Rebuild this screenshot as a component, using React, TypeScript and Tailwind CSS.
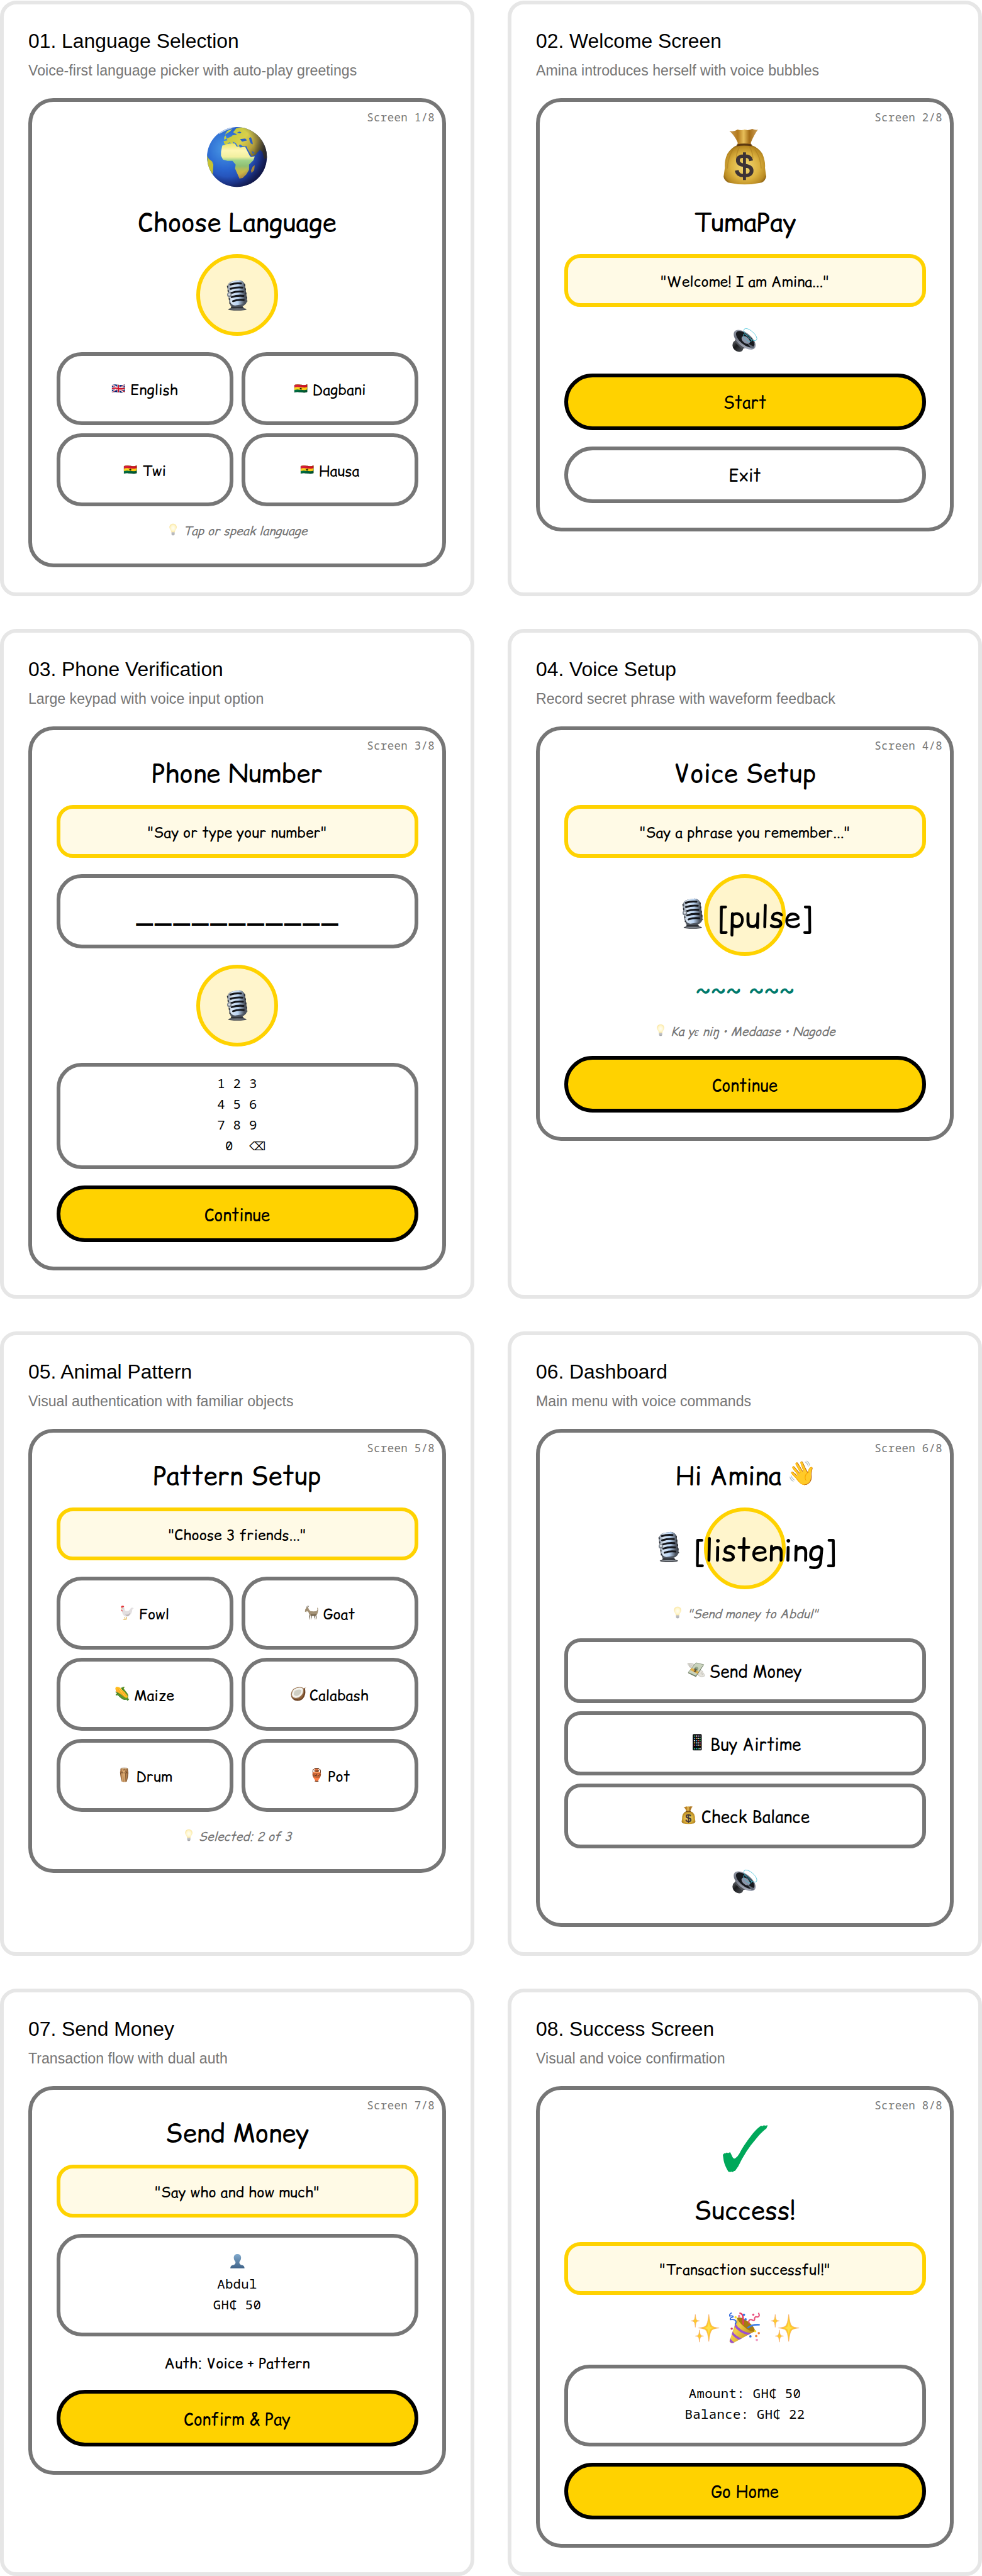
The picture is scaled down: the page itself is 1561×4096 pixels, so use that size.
import React from "react";

type Kids = { children: React.ReactNode };

/* ---------- pictograms: each is drawn on a 100 x 100 grid that is 1.25em wide ---------- */

function Pic({ children }: Kids) {
  return (
    <svg viewBox="0 0 100 100" className="inline-block h-[1.25em] w-[1.25em] -mx-[0.125em] -my-[0.3em] shrink-0 overflow-visible align-[0.125em]">
      {children}
    </svg>
  );
}

function Glyph({ char, size, flip, squash = 1 }: { char: string; size: number; flip?: boolean; squash?: number }) {
  return (
    <Pic>
      <text
        x="50"
        y={50 + size * 0.34}
        fontSize={size}
        textAnchor="middle"
        transform={flip ? "matrix(-1 0 0 1 100 0)" : `matrix(1 0 0 ${squash} 0 ${50 * (1 - squash)})`}
        className="font-['Noto_Color_Emoji'] not-italic"
      >
        {char}
      </text>
    </Pic>
  );
}

function Globe() {
  return (
    <Pic>
      <defs>
        <radialGradient id="sea" cx="0.3" cy="0.36" r="0.75">
          <stop offset="0" stopColor="#4a9be6" />
          <stop offset="0.45" stopColor="#2a66d0" />
          <stop offset="0.8" stopColor="#2243a8" />
          <stop offset="1" stopColor="#1c2459" />
        </radialGradient>
        <linearGradient id="africa" x1="0" y1="0" x2="0" y2="1">
          <stop offset="0" stopColor="#ece56a" />
          <stop offset="0.2" stopColor="#fdf6b4" />
          <stop offset="0.38" stopColor="#f2f0a0" />
          <stop offset="0.48" stopColor="#9fd38a" />
          <stop offset="0.64" stopColor="#8fbf72" />
          <stop offset="0.78" stopColor="#c9bb4a" />
          <stop offset="1" stopColor="#d3a541" />
        </linearGradient>
        <linearGradient id="asia" x1="0" y1="0" x2="1" y2="0.6">
          <stop offset="0" stopColor="#b5c832" />
          <stop offset="0.5" stopColor="#d9cf4c" />
          <stop offset="0.75" stopColor="#b6a13c" />
          <stop offset="1" stopColor="#4b4420" />
        </linearGradient>
        <radialGradient id="shade" cx="0.36" cy="0.4" r="0.66">
          <stop offset="0.65" stopColor="#0b0f3a" stopOpacity="0" />
          <stop offset="1" stopColor="#0b0f3a" stopOpacity="0.65" />
        </radialGradient>
        <clipPath id="disc"><circle cx="50" cy="50" r="47" /></clipPath>
      </defs>
      <circle cx="50" cy="50" r="47" fill="url(#sea)" />
      <g clipPath="url(#disc)">
        <path d="M30 29l-1-4 6-1-1-3 7-3 2-2 6-1 2-3 4 1 2-2-3-1-3 1-1 3-3-1-3-2 5-6 9-2 8 1 12 6 9 9 9 18 2 14-5 2-3-11-4-3-3 3-4 5-6 2-6-11-2-5-6 0-4-3-2 2 2 3-3-1-4-6-5-2 3 5-2 1-5-5-3 1-2 4z" fill="url(#asia)" />
        <path d="M55 22l8-1 3 3-8 2zM69 20l3-1 2 5 1 6-3-1-2-4zM73 40l5 4-3 1z" fill="#2a5fc6" />
        <path d="M27 32l11-3 9 0 2 4 6 2 8-1 3 6 4 8 2 2 6-1-2 6-7 7 0 8-4 7-6 6-5 1-3-7-4-9 1-6-5-6-8 0-7-2-3-6 0-6z" fill="url(#africa)" />
        <path d="M78 63l-1 8-4 4-1-4 3-6z" fill="#c9a53f" />
        <path d="M3 48l3 5 5 4 2 5-1 16-3 0-4-9z" fill="#c6c233" />
        <path d="M30 19l2-3 2 5-4 2zM35 9l8-3-4 4-8 5z" fill="#c3cf4a" />
        <path d="M22 12q14-9 26-9l-6 2q-10 3-20 9z" fill="#dfe9ef" opacity="0.8" />
      </g>
      <circle cx="50" cy="50" r="47" fill="url(#shade)" />
    </Pic>
  );
}

function MoneyBag() {
  return (
    <Pic>
      <defs>
        <radialGradient id="bag" cx="0.5" cy="0.55" r="0.6">
          <stop offset="0" stopColor="#f3d873" />
          <stop offset="0.55" stopColor="#dcb240" />
          <stop offset="0.85" stopColor="#b98a22" />
          <stop offset="1" stopColor="#7d5410" />
        </radialGradient>
        <linearGradient id="neck" x1="0" x2="1" y1="0" y2="0">
          <stop offset="0" stopColor="#c99a52" />
          <stop offset="0.3" stopColor="#b37a1c" />
          <stop offset="0.5" stopColor="#e8bf5a" />
          <stop offset="0.7" stopColor="#a56d17" />
          <stop offset="1" stopColor="#d0a35c" />
        </linearGradient>
      </defs>
      <path d="M26 9q7 2 13-2 6 2 11 0 6 2 12-1 5 2 9 1-6 8-11 20v5H39v-5Q34 16 26 9z" fill="url(#neck)" />
      <path d="M39 31h21q12 4 18 14 5 12 4 22l2 14q-2 7-7 9-27 6-53 0-6-3-7-9l2-14q-1-12 4-22 6-10 16-14z" fill="url(#bag)" />
      <path d="M32 38q-8 12-9 30M66 38q9 12 10 30M42 34q-5 10-5 18M58 34q5 10 5 18" fill="none" stroke="#a87a1e" strokeWidth="1.6" opacity="0.5" />
      <path d="M38 30q11-2 23 0v3q-12-2-23 0z" fill="#5d3910" />
      <text x="49.5" y="82" fontSize="52" textAnchor="middle" fill="#3d3336" stroke="#3d3336" strokeWidth="1.6" className="font-['Liberation_Sans']">$</text>
    </Pic>
  );
}

function Mic() {
  return (
    <Pic>
      <defs>
        <linearGradient id="steel" x1="0" y1="0" x2="1" y2="0.25">
          <stop offset="0" stopColor="#7f8894" />
          <stop offset="0.3" stopColor="#d9e6f4" />
          <stop offset="0.65" stopColor="#b9d3f2" />
          <stop offset="1" stopColor="#4c535e" />
        </linearGradient>
      </defs>
      <ellipse cx="50" cy="87" rx="24" ry="3.4" fill="#40444b" />
      <ellipse cx="50" cy="86" rx="19" ry="1.4" fill="#9aa0a8" />
      <path d="M31 50q-1 22 7 31h26" fill="none" stroke="#565c66" strokeWidth="6" />
      <path d="M34 80h30l4 5H32z" fill="#2f3238" />
      <g transform="rotate(-8 50 45)">
        <rect x="26" y="12" width="47" height="68" rx="16" fill="#4f5660" />
        <rect x="27" y="12" width="45" height="64" rx="15" fill="url(#steel)" />
        <path d="M35 20q14-3 28 1M34 31q16-3 31 1M34 42q16-3 31 1M34 53q16-3 31 1M36 64q14-3 28 1" fill="none" stroke="#14161b" strokeWidth="5" strokeLinecap="round" />
        <path d="M27 22v48M72 24v46" stroke="#2a2d33" strokeWidth="3" strokeDasharray="5 6" />
      </g>
      <circle cx="29" cy="49" r="6" fill="#7c848e" />
      <circle cx="29" cy="48" r="3.2" fill="#d8dde3" />
    </Pic>
  );
}

function Speaker() {
  return (
    <Pic>
      <defs>
        <linearGradient id="magnet" x1="0" y1="0" x2="1" y2="1">
          <stop offset="0" stopColor="#6a6d72" />
          <stop offset="0.4" stopColor="#17181a" />
          <stop offset="1" stopColor="#55585d" />
        </linearGradient>
        <linearGradient id="rim" x1="0" y1="0" x2="1" y2="1">
          <stop offset="0" stopColor="#aab0bf" />
          <stop offset="0.5" stopColor="#6a6f7c" />
          <stop offset="1" stopColor="#c2c8d6" />
        </linearGradient>
      </defs>
      <path d="M7 60q-3 8 0 17 6 13 20 16 9 2 15-4l6-14-24-24q-12 0-17 9z" fill="url(#magnet)" />
      <path d="M22 36l-9 20 26 26 26-4z" fill="#4e5157" />
      <ellipse cx="50" cy="49" rx="48" ry="25" transform="rotate(40 50 49)" fill="url(#rim)" />
      <ellipse cx="52" cy="47" rx="41" ry="19" transform="rotate(40 52 47)" fill="#17191e" />
      <ellipse cx="54" cy="50" rx="18" ry="11" transform="rotate(40 54 50)" fill="#8b95a8" />
      <path d="M58 60l24 14 3 6-9 1z" fill="#5d6572" />
      <g fill="none" stroke="#3fc0d6" strokeWidth="1.7">
        <ellipse cx="71" cy="30" rx="30" ry="13" transform="rotate(42 71 30)" />
        <ellipse cx="60" cy="42" rx="19" ry="8" transform="rotate(42 60 42)" />
      </g>
    </Pic>
  );
}

function Bulb() {
  return (
    <Pic>
      <g opacity="0.62">
        <defs>
          <radialGradient id="glow" cx="0.5" cy="0.5" r="0.55">
            <stop offset="0" stopColor="#fffef0" />
            <stop offset="0.6" stopColor="#fff2b0" />
            <stop offset="1" stopColor="#f5cf55" />
          </radialGradient>
        </defs>
        <path d="M50 11c14 0 24 10 24 23 0 13-11 19-13 34H39C37 53 26 47 26 34c0-13 10-23 24-23z" fill="url(#glow)" />
        <path d="M40 68h20v14l-5 6H45l-5-6z" fill="#70727a" />
        <path d="M40 73h20M40 79h20" stroke="#c9ccd1" strokeWidth="2.5" />
      </g>
    </Pic>
  );
}

function Rooster() {
  return (
    <Pic>
      <path d="M36 74l2 10-10 2M46 74l0 11-10 3" fill="none" stroke="#dba52f" strokeWidth="3.2" strokeLinecap="round" />
      <path d="M21 24q3-7 9-5 4 2 5 12 2 9 12 9 13 0 18-10 7-13 21-5-8 1-9 9-2 22-17 32-12 8-23 3Q20 60 21 40z" fill="#e3dfe0" />
      <path d="M38 58q14 8 27-9-1 16-13 20-9 1-14-11z" fill="#bdb7b9" />
      <path d="M16 19q-2-7 3-7 5-3 9-1 5 1 4 7l-7 1-6 5zM18 31q6 2 5 12-5 0-6-6z" fill="#e2383b" />
      <path d="M20 25l-6 3 6 2z" fill="#e4b13d" />
      <circle cx="25" cy="24" r="1.6" fill="#222" />
    </Pic>
  );
}

function Goat() {
  return (
    <Pic>
      <path d="M40 62l-2 24M48 64l-1 22M72 60l5 24M66 60l2 26" stroke="#5f5341" strokeWidth="4.5" />
      <path d="M38 76l-1 11M47 78l-1 9M68 78l1 9M76 76l1 10" stroke="#e9e4da" strokeWidth="4.5" />
      <path d="M14 32l8-10 8-2 5 12 8 9q18 3 34 0l5-10q-3-5-1-10 6 4 5 14-3 22-9 29-14 4-32 2-9-1-12-18l-8-7-5 5-7-2z" fill="#a39175" />
      <path d="M45 56q14 6 30 0l-3 9q-14 3-26 1z" fill="#74654e" />
      <path d="M23 23q0-9 6-12M28 22q1-7 7-9" fill="none" stroke="#5b4f3d" strokeWidth="3" />
      <path d="M19 42l2 9 4-10z" fill="#ece6da" />
      <circle cx="23" cy="29" r="1.5" fill="#222" />
    </Pic>
  );
}

function Coconut() {
  return (
    <Pic>
      <path d="M88 16q8 28-2 48Q74 88 49 88 22 87 13 64l50-30z" fill="#6d4324" />
      <path d="M80 34q6 20-4 34-10 13-26 15 22-14 30-49z" fill="#8d5f38" />
      <path d="M24 24Q42 10 64 12q16 2 20 10 3 24-14 42Q52 82 31 76 13 72 12 52q2-17 12-28z" fill="#9a7654" />
      <path d="M27 27Q43 15 62 16q14 2 17 8 2 22-13 37Q50 76 33 71 18 67 17 52q2-15 10-25z" fill="#f4f3ee" />
      <path d="M33 34q14-10 28-8 9 2 9 8-2 14-12 21-12 9-23 5-9-4-8-11 1-9 6-15z" fill="#cfcfc4" />
      <path d="M86 22l9-8" stroke="#9a7654" strokeWidth="2" />
    </Pic>
  );
}

function Drum() {
  return (
    <Pic>
      <defs>
        <linearGradient id="barrel" x1="0" x2="1" y1="0" y2="0">
          <stop offset="0" stopColor="#a87040" />
          <stop offset="0.4" stopColor="#f0bd80" />
          <stop offset="1" stopColor="#8f5c30" />
        </linearGradient>
      </defs>
      <path d="M31 14q19-5 38 0l4 20q-1 30-9 52-14 5-27 0-9-22-10-52z" fill="url(#barrel)" />
      <ellipse cx="50" cy="14" rx="19" ry="3.5" fill="#f2d8b0" stroke="#6b4423" strokeWidth="1.6" />
      <path d="M28 38h45M30 16l8 22 12-22 12 22 8-22M29 38l9 48M43 38l3 50M58 38l-3 50M72 38l-9 48" fill="none" stroke="#5d3a1d" strokeWidth="2" />
    </Pic>
  );
}

function CashWings() {
  return (
    <Pic>
      <path d="M10 17q20-3 34 7l-4 24Q26 46 24 38q-8-1-8-8-6-5-6-13z" fill="#dcdad3" stroke="#a9a79e" strokeWidth="1.5" />
      <path d="M92 80Q76 88 62 78l-4-22q12-6 20-2 6 0 6 8 7 6 8 18z" fill="#e4e2db" stroke="#a9a79e" strokeWidth="1.5" />
      <path d="M12 66l38-50 38 10-38 58z" fill="#6d7a62" />
      <path d="M12 62l38-47 38 9-38 55z" fill="#c9d3bd" stroke="#6f7c66" strokeWidth="2" />
      <ellipse cx="50" cy="47" rx="10" ry="13" transform="rotate(40 50 47)" fill="#93a386" />
      <path d="M29 40l35 18-6 11-37-19z" fill="#e2b04a" />
      <path d="M16 22l14 8M15 28l12 8M84 74l-12-8M86 68l-11-6" stroke="#a9a79e" strokeWidth="1.5" />
      <text x="46" y="60" fontSize="24" textAnchor="middle" fill="#3c3a30" transform="rotate(25 46 52)" className="font-['Liberation_Sans'] font-bold">$</text>
    </Pic>
  );
}

const APPS = ["#3fbf6a", "#f4f4f4", "#c9a3f0", "#8a8a92", "#3aa7f0", "#f2a33a", "#f4f4f4", "#4fd07a", "#f4f4f4", "#45b8f5", "#ff5b4d", "#3fbf6a", "#f0c63a", "#9ad7f5", "#f4f4f4", "#e0549b", "#ef5350", "#3aa7f0", "#f4f4f4", "#ff9f2f"];

function Phone() {
  return (
    <Pic>
      <rect x="28" y="10" width="44" height="80" rx="5" fill="#17181b" />
      <rect x="30.5" y="14" width="39" height="72" fill="#050507" />
      {APPS.map((c, i) => (
        <rect key={i} x={33.5 + (i % 4) * 9} y={17 + Math.floor(i / 4) * 11} width="6" height="6" rx="1" fill={c} />
      ))}
      <path d="M33.5 78h6v6h-6zM51.5 78h6v6h-6z" fill="#3fd06a" />
      <path d="M42.5 78h6v6h-6z" fill="#3aa7f0" />
      <path d="M60.5 78h6v6h-6z" fill="#f4f4f4" />
    </Pic>
  );
}

function Person() {
  return (
    <Pic>
      <defs>
        <linearGradient id="bust" x1="0" x2="0" y1="0" y2="1">
          <stop offset="0" stopColor="#82abce" />
          <stop offset="1" stopColor="#3f6389" />
        </linearGradient>
      </defs>
      <path d="M50 10c13 0 20 9 20 21 0 12-6 17-9 23-1 6 0 12 7 15 12 4 20 4 21 20H11c1-16 9-16 21-20 7-3 8-9 7-15-3-6-9-11-9-23 0-12 7-21 20-21z" fill="url(#bust)" />
    </Pic>
  );
}

function star(cx: number, cy: number, rx: number, ry: number) {
  const a = rx * 0.2;
  const b = ry * 0.16;
  return `M${cx} ${cy - ry}Q${cx + a * 0.6} ${cy - b * 1.6} ${cx + a * 1.5} ${cy - b}Q${cx + a * 2} ${cy - b * 0.3} ${cx + rx} ${cy}Q${cx + a * 2} ${cy + b * 0.3} ${cx + a * 1.5} ${cy + b}Q${cx + a * 0.6} ${cy + b * 1.6} ${cx} ${cy + ry}Q${cx - a * 0.6} ${cy + b * 1.6} ${cx - a * 1.5} ${cy + b}Q${cx - a * 2} ${cy + b * 0.3} ${cx - rx} ${cy}Q${cx - a * 2} ${cy - b * 0.3} ${cx - a * 1.5} ${cy - b}Q${cx - a * 0.6} ${cy - b * 1.6} ${cx} ${cy - ry}z`;
}

function Sparkles() {
  return (
    <Pic>
      <g fill="#fdc92c" stroke="#f5a566" strokeWidth="1.2">
        <path d={star(62, 50, 32, 42)} />
        <path d={star(20, 28, 13, 20)} />
        <path d={star(33, 75, 13, 19)} />
      </g>
      <path d={star(62, 50, 16, 22)} fill="#ffe14a" />
    </Pic>
  );
}

function Party() {
  return (
    <Pic>
      <defs>
        <linearGradient id="cone" x1="0" y1="0" x2="1" y2="0.6">
          <stop offset="0" stopColor="#b8901a" />
          <stop offset="0.4" stopColor="#f3cf4a" />
          <stop offset="1" stopColor="#b98a16" />
        </linearGradient>
        <clipPath id="coneClip"><path d="M27 19L3 91q1 6 11 6L80 61Q64 62 46 44 30 30 27 19z" /></clipPath>
      </defs>
      <ellipse cx="54" cy="40" rx="34" ry="12" transform="rotate(38 54 40)" fill="#a77a10" />
      <path d="M27 19L3 91q1 6 11 6L80 61Q64 62 46 44 30 30 27 19z" fill="url(#cone)" />
      <g clipPath="url(#coneClip)" fill="none" stroke="#9b51cf" strokeWidth="7">
        <path d="M18 38q16 26 50 32M9 62q12 18 32 24M2 82q4 10 14 16" />
      </g>
      <path d="M10 3q-8 4-6 10 12-2 10 3-10 2-8 8 14-2 17 5 2 5-3 10" fill="none" stroke="#2f67dc" strokeWidth="3.4" />
      <path d="M34 4q10 1 11 12l1 24" fill="none" stroke="#e93a63" strokeWidth="5" />
      <path d="M93 3q6 12-3 13-8-3-9 4 1 9-6 6-7-5-11 1-3 3 1 9" fill="none" stroke="#e8517c" strokeWidth="4" />
      <path d="M59 50q14-12 38-10" fill="none" stroke="#3f7ee6" strokeWidth="5" />
      <g>
        <circle cx="48" cy="9" r="3.6" fill="#3478e6" /><circle cx="53" cy="23" r="3.6" fill="#3478e6" />
        <circle cx="33" cy="13" r="3.6" fill="#ef7fa8" /><circle cx="22" cy="17" r="3.6" fill="#fbe02c" />
        <circle cx="77" cy="9" r="3.4" fill="#ea4c7d" /><circle cx="10" cy="52" r="3.4" fill="#d13a5d" />
        <circle cx="83" cy="60" r="3.6" fill="#fbe02c" /><circle cx="94" cy="66" r="3.6" fill="#f2883a" />
        <circle cx="68" cy="76" r="3.6" fill="#2f72dd" /><circle cx="86" cy="75" r="3.6" fill="#f2883a" />
        <circle cx="88" cy="87" r="3.8" fill="#f19bc4" />
      </g>
    </Pic>
  );
}

/* ---------- wireframe parts ---------- */

function Heading({ children }: Kids) {
  return <h2 className="h-[54px] pt-[2.5px] text-center text-[40.5px] leading-[54px] whitespace-nowrap">{children}</h2>;
}

function Speech({ children }: Kids) {
  return (
    <div className="flex h-[84px] items-center justify-center rounded-[26px] border-[6px] border-[#ffd200] bg-[#fffae6] pt-[3px] text-[23.1px] leading-[32px]">
      {children}
    </div>
  );
}

function Circle({ children }: Kids) {
  return (
    <div className="mx-auto flex h-[130px] w-[130px] items-center justify-center rounded-full border-[6px] border-[#ffd200] bg-[#fff5cc] pt-[5px] text-[48.5px] leading-[68px] whitespace-nowrap">
      <span className="block">{children}</span>
    </div>
  );
}

function MicCircle() {
  return (
    <div className="mx-auto flex h-[130px] w-[130px] items-center justify-center rounded-full border-[6px] border-[#ffd200] bg-[#fff5cc] text-[48.5px]">
      <Mic />
    </div>
  );
}

function Tile({ children }: Kids) {
  return (
    <div className="flex h-[116px] items-center justify-center rounded-[40px] border-[6px] border-[#767676] pt-[3px] text-[23.1px] leading-[32px]">
      <span>{children}</span>
    </div>
  );
}

function Option({ children }: Kids) {
  return (
    <div className="flex h-[102.7px] items-center justify-center rounded-[26px] border-[6px] border-[#767676] pt-[3px] text-[26.1px] leading-[36px]">
      <span>{children}</span>
    </div>
  );
}

function Primary({ children }: Kids) {
  return (
    <button className="flex h-[90px] items-center justify-center rounded-full border-[6px] border-black bg-[#ffd200] pt-[3px] text-[26.1px] leading-[36px]">
      {children}
    </button>
  );
}

function Hint({ children }: Kids) {
  return (
    <p className="h-[26px] text-center text-[19.4px] leading-[28px] text-[#767676] italic">
      <Bulb /> {children}
    </p>
  );
}

function MonoBox({ children }: Kids) {
  return (
    <div className="rounded-[40px] border-[6px] border-[#767676] pt-[23.5px] pb-[28px] text-center font-['Noto_Sans_Mono','DejaVu_Sans_Mono',monospace] text-[20.7px] leading-[33.25px] tracking-[0.32px] whitespace-pre">
      {children}
    </div>
  );
}

function Screen({ n, title, sub, children }: { n: number; title: string; sub: string; children: React.ReactNode }) {
  return (
    <section className="rounded-[26px] border-[6px] border-[#e6e6e6] px-[39px] pt-[39px] font-['Liberation_Sans',Arial,sans-serif]">
      <h1 className="text-[31.85px] leading-[38px]">{`0${n}. ${title}`}</h1>
      <p className="mt-[14px] text-[23.15px] leading-[28px] text-[#767676]">{sub}</p>
      <div className="relative mt-[30px] flex flex-col gap-[26px] rounded-[40px] border-[6px] border-[#767676] px-[38.5px] py-[39px] font-['Comic_Relief','Comic_Neue','Open_Sans',cursive]">
        <span className="absolute top-[14px] right-[12px] font-['Noto_Sans_Mono','DejaVu_Sans_Mono',monospace] text-[17.4px] leading-[20px] tracking-[0.33px] text-[#767676]">
          {`Screen ${n}/8`}
        </span>
        {children}
      </div>
    </section>
  );
}

export default function App() {
  return (
    <main className="grid w-[1561px] grid-cols-[754px_754px] grid-rows-[947px_1065px_993px_934px] gap-x-[53px] gap-y-[52px] bg-white pt-px text-black">
      <Screen n={1} title="Language Selection" sub="Voice-first language picker with auto-play greetings">
        <div className="flex h-[97px] items-center justify-center text-[81px] leading-none"><Globe /></div>
        <Heading>Choose Language</Heading>
        <MicCircle />
        <div className="grid grid-cols-2 gap-[13px]">
          <Tile><Glyph char="🇬🇧" size={62} squash={0.85} /> English</Tile>
          <Tile><Glyph char="🇬🇭" size={62} squash={0.85} /> Dagbani</Tile>
          <Tile><Glyph char="🇬🇭" size={62} squash={0.85} /> Twi</Tile>
          <Tile><Glyph char="🇬🇭" size={62} squash={0.85} /> Hausa</Tile>
        </div>
        <Hint>Tap or speak language</Hint>
      </Screen>

      <Screen n={2} title="Welcome Screen" sub="Amina introduces herself with voice bubbles">
        <div className="flex h-[97px] items-center justify-center text-[81px] leading-none"><MoneyBag /></div>
        <Heading>TumaPay</Heading>
        <Speech>"Welcome! I am Amina..."</Speech>
        <div className="flex h-[53.5px] items-center justify-center text-[34.7px] leading-none"><Speaker /></div>
        <Primary>Start</Primary>
        <button className="flex h-[90px] items-center justify-center rounded-full border-[6px] border-[#767676] pt-[3px] text-[26.1px] leading-[36px]">Exit</button>
      </Screen>

      <Screen n={3} title="Phone Verification" sub="Large keypad with voice input option">
        <Heading>Phone Number</Heading>
        <Speech>"Say or type your number"</Speech>
        <div className="flex h-[117.5px] items-center justify-center rounded-[40px] border-[6px] border-[#767676] pt-[5px] pl-[4px] text-[40.5px] leading-[54px] tracking-[0.1em]">
          ___________
        </div>
        <MicCircle />
        <div className="flex h-[169.5px] justify-center rounded-[40px] border-[6px] border-[#767676] pt-[10px] font-['Noto_Sans_Mono','DejaVu_Sans_Mono',monospace] text-[20.7px] leading-[33.25px] tracking-[0.32px]">
          <pre className="h-[133px] w-[63.7px] font-[inherit] whitespace-pre">
            {"1 2 3\n4 5 6\n7 8 9\n 0  "}
            <span className="font-['DejaVu_Sans'] text-[18.5px] leading-none">⌫</span>
          </pre>
        </div>
        <Primary>Continue</Primary>
      </Screen>

      <Screen n={4} title="Voice Setup" sub="Record secret phrase with waveform feedback">
        <Heading>Voice Setup</Heading>
        <Speech>"Say a phrase you remember..."</Speech>
        <Circle><Mic /> [pulse]</Circle>
        <p className="h-[55px] text-center text-[40.5px] leading-[60px] text-[#007a6c]">~~~ ~~~</p>
        <Hint>Ka yɛ niŋ • Medaase • Nagode</Hint>
        <Primary>Continue</Primary>
      </Screen>

      <Screen n={5} title="Animal Pattern" sub="Visual authentication with familiar objects">
        <Heading>Pattern Setup</Heading>
        <Speech>"Choose 3 friends..."</Speech>
        <div className="grid grid-cols-2 gap-[13px]">
          <Tile><Rooster /> Fowl</Tile>
          <Tile><Goat /> Goat</Tile>
          <Tile><Glyph char="🌽" size={70} flip /> Maize</Tile>
          <Tile><Coconut /> Calabash</Tile>
          <Tile><Drum /> Drum</Tile>
          <Tile><Glyph char="🏺" size={69} /> Pot</Tile>
        </div>
        <Hint>Selected: 2 of 3</Hint>
      </Screen>

      <Screen n={6} title="Dashboard" sub="Main menu with voice commands">
        <Heading>Hi Amina <Glyph char="👋" size={74} /></Heading>
        <Circle><Mic /> [listening]</Circle>
        <Hint>"Send money to Abdul"</Hint>
        <div className="flex flex-col gap-[13px]">
          <Option><CashWings /> Send Money</Option>
          <Option><Phone /> Buy Airtime</Option>
          <Option><MoneyBag /> Check Balance</Option>
        </div>
        <div className="flex h-[53.5px] items-center justify-center text-[34.7px] leading-none"><Speaker /></div>
      </Screen>

      <Screen n={7} title="Send Money" sub="Transaction flow with dual auth">
        <Heading>Send Money</Heading>
        <Speech>"Say who and how much"</Speech>
        <MonoBox><span className="text-[23.1px] leading-none"><Person /></span>{"\nAbdul\nGH₵ 50"}</MonoBox>
        <p className="h-[33px] text-center text-[23.1px] leading-[35.5px]">Auth: Voice + Pattern</p>
        <Primary>Confirm &amp; Pay</Primary>
      </Screen>

      <Screen n={8} title="Success Screen" sub="Visual and voice confirmation">
        <div className="flex h-[97px] items-end justify-center pb-[5px]">
          <svg viewBox="0 0 98 103" className="h-[75px] w-[71px]">
            <path d="M0 65l3-3 3 0 2-2 4 1 4-2 4 8q3 8 7 6 5-3 9-10Q44 46 66 18 76 6 84 1l3 1 3-2 3 1 5-1v3l-2 1 1 2Q84 16 72 31 50 56 34 90l-7 10-3 1-2 2-3-1-3 1-4-1Q4 88 2 78z" fill="#00a85a" />
          </svg>
        </div>
        <Heading>Success!</Heading>
        <Speech>"Transaction successful!"</Speech>
        <p className="h-[58.5px] text-center text-[41px] leading-[62px] [word-spacing:10.4px]"><Sparkles /> <Party /> <Sparkles /></p>
        <MonoBox>{"Amount: GH₵ 50\nBalance: GH₵ 22"}</MonoBox>
        <Primary>Go Home</Primary>
      </Screen>
    </main>
  );
}
